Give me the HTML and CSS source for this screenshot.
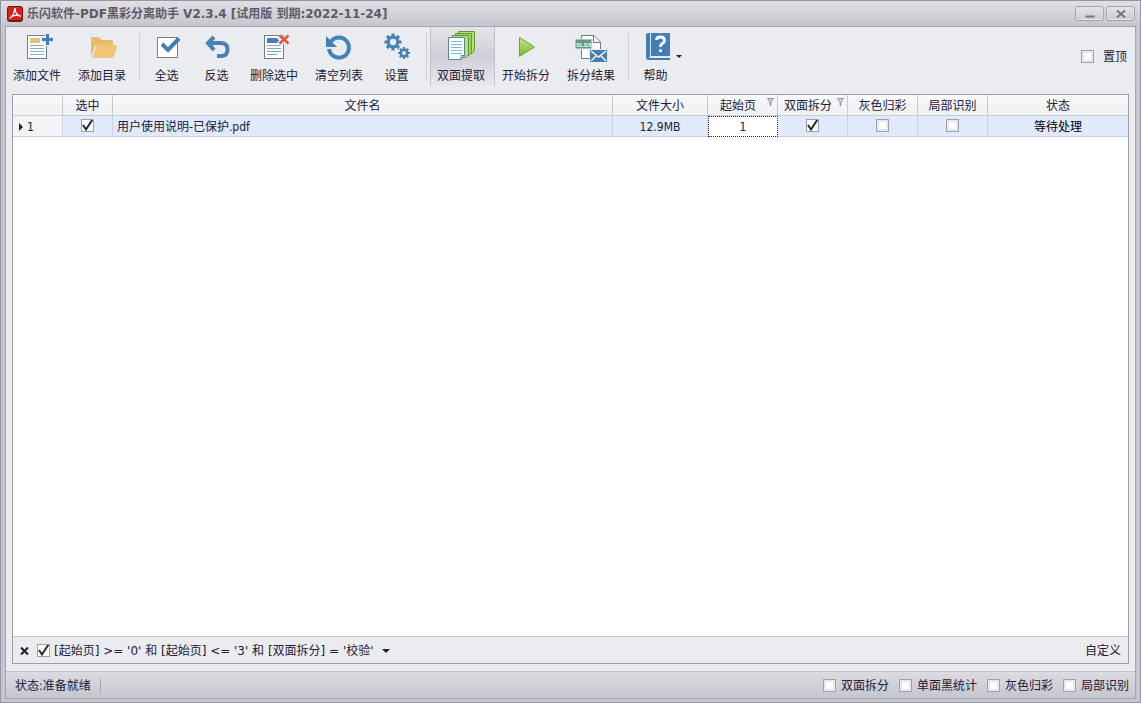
FILE: index.html
```
<!DOCTYPE html>
<html lang="zh-CN">
<head>
	<meta charset="utf-8">
	<title>乐闪软件-PDF黑彩分离助手</title>
	<link rel="stylesheet" href="styles.css">
</head>
<body>

<header class="titlebar">
	<svg class="app-icon" width="16" height="16" viewBox="0 0 16 16">
		<rect width="16" height="16" rx="3" fill="#7e1414"/>
		<rect x="1" y="1" width="14" height="13" rx="2" fill="#d3211c"/>
		<path d="M2.5 12.5C5 11 7.500 7 7.500 3.500C7.500 2 8.600 2.500 8.300 4C8 6.500 11 10 13.500 10.500M4 11C7 9 10 8.800 13.500 9.500" fill="none" stroke="#fff" stroke-width="1.200"/>
	</svg>
	<h1>乐闪软件-PDF黑彩分离助手 V2.3.4 [试用版 到期:2022-11-24]</h1>
	<button class="win-btn" type="button" aria-label="最小化">
		<svg width="10" height="10" viewBox="0 0 10 10"><path d="M0.500 7.500H9.500" stroke="#74757d" stroke-width="2"/></svg>
	</button>
	<button class="win-btn" type="button" aria-label="关闭">
		<svg width="10" height="10" viewBox="0 0 10 10"><path d="M1 1.500L9 8.500M9 1.500L1 8.500" stroke="#74757d" stroke-width="2"/></svg>
	</button>
</header>

<div class="window">
	<nav class="toolbar">
		<button class="tool" type="button">
			<svg width="32" height="32" viewBox="0 0 32 32">
				<rect x="6.500" y="5.500" width="19" height="23" fill="#fff" stroke="#6f7f8c"/>
				<rect x="9" y="8" width="10" height="5" fill="#e3c477"/>
				<path d="M9 15.500H23M9 18.500H23M9 21.500H23M9 24.500H23" stroke="#86acd0"/>
				<path d="M26.500 3V16M19.500 9.500H32" stroke="#e9eaee" stroke-width="5"/>
				<path d="M26.500 4V15M21 9.500H32" stroke="#437eb5" stroke-width="3"/>
			</svg>
			<span>添加文件</span>
		</button>
		<button class="tool" type="button">
			<svg width="32" height="32" viewBox="0 0 32 32">
				<path d="M5 27V8Q5 7 6 7H13L16 10H26Q27 10 27 11V15H11Q9.500 15 9 16Z" fill="#e9bd68"/>
				<path d="M6.500 28L10 17Q10.500 15 12 15H30Q31.500 15 31 17L28 26Q27.500 28 26 28Z" fill="#f0c578"/>
			</svg>
			<span>添加目录</span>
		</button>
		<i class="separator"></i>
		<button class="tool" type="button">
			<svg width="32" height="32" viewBox="0 0 32 32">
				<rect x="6.500" y="7.500" width="20" height="20" fill="#fff" stroke="#73808d"/>
				<path d="M11 14L17 20L28 8.500" fill="none" stroke="#437eb5" stroke-width="4"/>
			</svg>
			<span>全选</span>
		</button>
		<button class="tool" type="button">
			<svg width="32" height="32" viewBox="0 0 32 32">
				<path d="M13 7L7 13L13 20M8 13H20Q26.500 13 26.500 19.500Q26.500 26 20 26H16" fill="none" stroke="#4682b8" stroke-width="4"/>
			</svg>
			<span>反选</span>
		</button>
		<button class="tool" type="button">
			<svg width="32" height="32" viewBox="0 0 32 32">
				<rect x="6.500" y="5.500" width="19" height="23" fill="#fff" stroke="#6f7f8c"/>
				<path d="M9 9Q9 8 10 8H19L21 10.500L19 13H9Z" fill="#437eb5"/>
				<path d="M9 15.500H23M9 18.500H23M9 21.500H23M9 24.500H19" stroke="#7ba4ca"/>
				<path d="M21 6L30 14M30 6L21 14" stroke="#e9eaee" stroke-width="5"/>
				<path d="M21.500 5.500L30.500 13.500M30.500 5.500L21.500 13.500" stroke="#db5738" stroke-width="2.500"/>
			</svg>
			<span>删除选中</span>
		</button>
		<button class="tool" type="button">
			<svg width="32" height="32" viewBox="0 0 32 32">
				<path d="M8 11.500A10 10 0 1 1 6 19" fill="none" stroke="#4682b8" stroke-width="4"/>
				<path d="M3 6V17H14Z" fill="#4682b8"/>
			</svg>
			<span>清空列表</span>
		</button>
		<button class="tool" type="button">
			<svg width="32" height="32" viewBox="0 0 32 32">
				<g fill="none" stroke="#4682b8">
					<circle cx="12" cy="12" r="4.800" stroke-width="3.200"/>
					<path d="M12 3.500V6M12 18V20.500M3.500 12H6M18 12H20.500M6 6L7.800 7.800M16.200 16.200L18 18M18 6L16.200 7.800M7.800 16.200L6 18" stroke-width="3.200"/>
					<circle cx="23" cy="23" r="3.200" stroke-width="2.600"/>
					<path d="M23 17V19M23 27V29M17 23H19M27 23H29M18.800 18.800L20.200 20.200M25.800 25.800L27.200 27.200M27.200 18.800L25.800 20.200M20.200 25.800L18.800 27.200" stroke-width="2.200"/>
				</g>
			</svg>
			<span>设置</span>
		</button>
		<i class="separator"></i>
		<button class="tool tool-active" type="button" aria-pressed="true">
			<svg width="32" height="32" viewBox="0 0 32 32">
				<g fill="#b9dc79" stroke="#5d9c35">
					<path d="M13.500 1.500H29.500V20.500L27 23.500H13.500Z"/>
					<path d="M10.500 3.500H26.500V22.500L24 25.500H10.500Z" fill="#a3d160"/>
					<path d="M7.500 5.500H23.500V24.500L21 27.500H7.500Z"/>
				</g>
				<path d="M3.500 7.500H19.500V25.500L16 29.500H3.500Z" fill="#fff" stroke="#5685a5"/>
				<path d="M6 11.500H17M6 14.500H17M6 17.500H17M6 20.500H17M6 23.500H17" stroke="#87b4dc"/>
				<path d="M19.500 25.500H16V29.500Z" fill="#d5e9f7" stroke="#5685a5"/>
			</svg>
			<span>双面提取</span>
		</button>
		<button class="tool" type="button">
			<svg width="32" height="32" viewBox="0 0 32 32">
				<defs>
					<linearGradient id="play" x1="0" y1="0" x2="0" y2="1">
						<stop offset="0" stop-color="#c4e486"/>
						<stop offset="1" stop-color="#7dbb2c"/>
					</linearGradient>
				</defs>
				<path d="M9.500 7.500L24.500 17L9.500 26.500Z" fill="url(#play)" stroke="#72a832" stroke-linejoin="round"/>
			</svg>
			<span>开始拆分</span>
		</button>
		<button class="tool" type="button">
			<svg width="32" height="32" viewBox="0 0 32 32">
				<path d="M6.500 5.500H19L25.500 12V28.500H6.500Z" fill="#fff" stroke="#727b84"/>
				<path d="M18.500 5.500V12.500H25.500" fill="none" stroke="#727b84"/>
				<rect y="9" width="17" height="10" fill="#659782" stroke="#e9eaee"/>
				<text x="1" y="17" class="xlsx">XLSX</text>
				<rect x="14" y="19" width="18" height="13" fill="#e9eaee"/>
				<rect x="15" y="20" width="17" height="12" fill="#437eb5"/>
				<path d="M16 21L23.500 27L31 21M16 31L21 26M31 31L26 26" fill="none" stroke="#fff" stroke-width="1.400"/>
			</svg>
			<span>拆分结果</span>
		</button>
		<i class="separator"></i>
		<button class="tool tool-menu" type="button">
			<svg width="32" height="32" viewBox="0 0 32 32">
				<path d="M8 3H30V26H10V28H30V30H9Q6 30 6 27V5Q6 3 8 3Z" fill="#437eb5"/>
				<path d="M10.500 3V27M9 27.500H30" stroke="#dce8f3"/>
				<path d="M16.500 10Q16.500 7 20.500 7Q24.500 7 24.500 10.500Q24.500 12.500 22.500 13.500Q20.500 14.500 20.500 17M20.500 19.500V22" fill="none" stroke="#fff" stroke-width="2.800"/>
			</svg>
			<span>帮助</span>
		</button>
		<label class="check pin"><input type="checkbox">置顶</label>
	</nav>

	<main class="grid">
		<table>
			<colgroup>
				<col class="col-index">
				<col class="col-index">
				<col>
				<col class="col-size">
				<col class="col-option">
				<col class="col-option">
				<col class="col-option">
				<col class="col-option">
				<col class="col-state">
			</colgroup>
			<thead>
				<tr>
					<th></th>
					<th>选中</th>
					<th>文件名</th>
					<th>文件大小</th>
					<th class="filtered">起始页
						<svg class="funnel" width="7" height="8" viewBox="0 0 7 8"><path d="M0.500 0.500H6.500L4 4V7.500H3V4Z" fill="#d5dbe8" stroke="#8995ae"/></svg>
					</th>
					<th class="filtered">双面拆分
						<svg class="funnel" width="7" height="8" viewBox="0 0 7 8"><path d="M0.500 0.500H6.500L4 4V7.500H3V4Z" fill="#d5dbe8" stroke="#8995ae"/></svg>
					</th>
					<th>灰色归彩</th>
					<th>局部识别</th>
					<th>状态</th>
				</tr>
			</thead>
			<tbody>
				<tr>
					<td class="row-index">1</td>
					<td><input type="checkbox" aria-label="选中" checked></td>
					<td class="file-name">用户使用说明-已保护.pdf</td>
					<td>12.9MB</td>
					<td class="editing"><input class="page-input" type="text" aria-label="起始页" value="1"></td>
					<td><input type="checkbox" aria-label="双面拆分" checked></td>
					<td><input type="checkbox" aria-label="灰色归彩"></td>
					<td><input type="checkbox" aria-label="局部识别"></td>
					<td class="state">等待处理</td>
				</tr>
			</tbody>
		</table>
		<div class="filter-bar">
			<button class="filter-close" type="button" aria-label="关闭筛选">
				<svg width="9" height="8" viewBox="0 0 9 8"><path d="M1 0.500L8 7.500M8 0.500L1 7.500" stroke="#1c1c2a" stroke-width="2"/></svg>
			</button>
			<label class="check filter-text"><input type="checkbox" checked>[起始页] &gt;= '0' 和 [起始页] &lt;= '3' 和 [双面拆分] = '校验'</label>
			<button class="filter-drop" type="button" aria-label="筛选记录"></button>
			<button class="customize" type="button">自定义</button>
		</div>
	</main>

	<footer class="statusbar">
		<span class="status-text">状态:准备就绪</span>
		<label class="check"><input type="checkbox">双面拆分</label>
		<label class="check"><input type="checkbox">单面黑统计</label>
		<label class="check"><input type="checkbox">灰色归彩</label>
		<label class="check"><input type="checkbox">局部识别</label>
	</footer>
</div>

</body>
</html>
```
FILE: styles.css
```
* {
	box-sizing: border-box;
}

body {
	display: flex;
	flex-direction: column;
	height: 100vh;
	margin: 0;
	padding: 0 4px 3px;
	border: 1px solid #9696a2;
	background-color: #c6c6cf;
	color: #20203a;
	font: 12px/16px "DejaVu Sans Condensed", "Noto Sans CJK SC", sans-serif;
}

button {
	padding: 0;
	border: 0;
	background: none;
	color: inherit;
	font: inherit;
}

svg {
	display: block;
}

/* title bar */

.titlebar {
	display: flex;
	align-items: center;
	height: 25px;
	margin: 0 -4px;
	padding: 0 5px 0 6px;
	background: linear-gradient(#dfdfe4, #c6c6ce);
}

.titlebar h1 {
	flex: 1;
	margin: 0 0 0 4px;
	color: #5b5c68;
	font-family: "DejaVu Sans", "Noto Sans CJK SC", sans-serif;
	font-size: 12px;
	white-space: nowrap;
}

.win-btn {
	display: flex;
	align-items: center;
	justify-content: center;
	width: 29px;
	height: 15px;
	margin-left: 2px;
	border: 1px solid #a2a2ac;
	border-radius: 3px;
	background: linear-gradient(#e3e3e8, #cbcbd3);
	box-shadow: inset 0 0 0 1px #e6e6ea;
}

.window {
	display: flex;
	flex: 1;
	flex-direction: column;
	min-height: 0;
	border: 1px solid #a5a5af;
	background-color: #ebecef;
}

/* toolbar */

.toolbar {
	display: flex;
	flex: none;
	height: 67px;
	padding-bottom: 8px;
}

.tool {
	position: relative;
	display: flex;
	flex-direction: column;
	align-items: center;
	min-width: 50px;
	padding: 3px 10px 0 7px;
	white-space: nowrap;
}

.tool svg {
	margin-bottom: 6px;
}

.tool-active {
	background: linear-gradient(#e4e5e9, #cfd0d7 50%, #e8e9ed);
	box-shadow: inset 1px 0 #c0c1c9, inset -1px 0 #c0c1c9;
}

.tool-menu::after {
	position: absolute;
	top: 28px;
	right: 0;
	border: 3px solid transparent;
	border-top-color: #222;
	border-bottom: 0;
	content: '';
}

.xlsx {
	fill: #fff;
	font: bold 6px "Liberation Sans", sans-serif;
}

.separator {
	width: 1px;
	margin: 6px 3px;
	background-color: #cfd0d6;
}

/* check boxes */

input[type="checkbox"] {
	flex: none;
	width: 13px;
	height: 13px;
	margin: 0;
	border: 1px solid #9fa1a8;
	background-color: #fff;
	box-shadow: inset 0 0 0 2px #e5e7ea;
	appearance: none;
}

input[type="checkbox"]:checked {
	background: #fff url("data:image/svg+xml,%3Csvg xmlns='http://www.w3.org/2000/svg' viewBox='0 0 13 13'%3E%3Cpath d='M2 6L5 10.500L11.500 0.500' fill='none' stroke='%23292929' stroke-width='2'/%3E%3C/svg%3E") center / 13px 13px no-repeat border-box;
	box-shadow: none;
}

.check {
	display: flex;
	align-items: center;
	gap: 5px;
	white-space: nowrap;
}

.pin {
	gap: 9px;
	margin: 0 8px 0 auto;
}

/* file grid */

.grid {
	display: flex;
	flex: 1;
	flex-direction: column;
	min-height: 0;
	margin: 0 6px 7px;
	border: 1px solid #9d9ea8;
	background-color: #fff;
}

table {
	width: 100%;
	border-collapse: separate;
	border-spacing: 0;
	table-layout: fixed;
}

.col-index {
	width: 50px;
}

.col-size {
	width: 95px;
}

.col-option {
	width: 70px;
}

.col-state {
	width: 140px;
}

th,
td {
	height: 21px;
	padding: 1px 0 0;
	border-right: 1px solid #cdd3e1;
	border-bottom: 1px solid #c9cdd8;
	font-weight: normal;
	line-height: 18px;
	text-align: center;
	white-space: nowrap;
}

th:last-child,
td:last-child {
	border-right: 0;
}

th {
	border-right-color: #c6c8ce;
	background: linear-gradient(#f9f9fa, #eff0f2);
}

td {
	background-color: #e1e9fc;
}

td input[type="checkbox"] {
	display: block;
	margin: 0 auto 2px;
}

.filtered {
	position: relative;
	padding-right: 9px;
}

.funnel {
	position: absolute;
	top: 3px;
	right: 3px;
}

.row-index {
	padding-left: 6px;
	background-color: #f3f4f6;
	text-align: left;
}

.row-index::before {
	display: inline-block;
	margin-right: 4px;
	border: 4px solid transparent;
	border-right: 0;
	border-left-color: #222;
	content: '';
}

.file-name {
	padding-left: 4px;
	text-align: left;
}

.state {
	color: #000;
}

.editing {
	padding: 0;
	border: 1px dotted #222;
	background-color: #fff;
}

.page-input {
	display: block;
	width: 100%;
	height: 18px;
	padding: 0;
	border: 0;
	background: none;
	color: inherit;
	font: inherit;
	text-align: center;
}

.filter-bar {
	display: flex;
	align-items: center;
	height: 27px;
	margin-top: auto;
	padding: 1px 7px 0;
	border-top: 1px solid #c5c6cc;
	background-color: #ebecef;
}

.filter-text {
	gap: 4px;
	margin: 0 8px;
	font-family: "DejaVu Sans", "Noto Sans CJK SC", sans-serif;
}

.filter-drop {
	border: 4px solid transparent;
	border-top-color: #222;
	border-bottom: 0;
}

.customize {
	margin-left: auto;
}

/* status bar */

.statusbar {
	display: flex;
	flex: none;
	align-items: center;
	gap: 10px;
	height: 27px;
	padding: 1px 6px 0 9px;
	border-top: 1px solid #c0c0c8;
	background: linear-gradient(#dbdbe0, #c6c6cf);
}

.status-text {
	margin-right: auto;
	padding-right: 9px;
	border-right: 1px solid #aaaab4;
}
```
